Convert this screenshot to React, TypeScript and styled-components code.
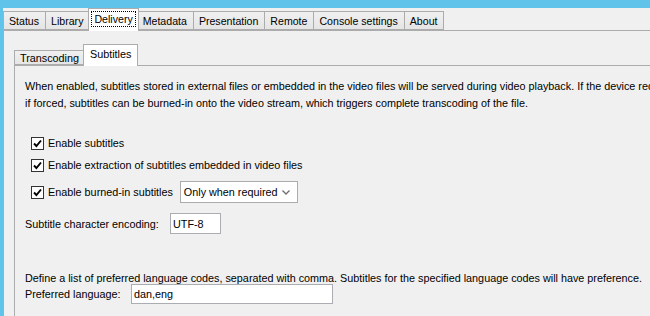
import React, { useState } from 'react'
import styled, { createGlobalStyle } from 'styled-components'

const GlobalStyle = createGlobalStyle`
  html, body {
    margin: 0;
    padding: 0;
    overflow: hidden;
  }
  body {
    font-family: 'Liberation Sans', Arial, sans-serif;
    font-size: 10.8px;
    color: #000;
  }
`

const topTabs = [
  'Status',
  'Library',
  'Delivery',
  'Metadata',
  'Presentation',
  'Remote',
  'Console settings',
  'About'
]

const Frame = styled.div`
  width: 650px;
  height: 316px;
  box-sizing: border-box;
  padding: 8px 0 0 3px;
  background: #60c3ea;
  overflow: hidden;
`

const Window = styled.div`
  height: 100%;
  background: #f0f0f0;
  display: flex;
  flex-direction: column;
`

const TabStrip = styled.div<{ $inner?: boolean }>`
  display: flex;
  align-items: flex-end;
  height: ${(p) => (p.$inner ? 20 : 22)}px;
  padding-left: 1px;
  border-bottom: 1px solid #acacac;
  flex-shrink: 0;
`

const Tab = styled.div<{ $active?: boolean; $inner?: boolean }>`
  box-sizing: border-box;
  font-size: ${(p) => (p.$inner ? 10.8 : 10.6)}px;
  height: ${(p) =>
    p.$active ? (p.$inner ? 22 : 23) : p.$inner ? 15 : 19}px;
  margin: 0 ${(p) => (p.$active ? -1 : 0)}px
    ${(p) => (p.$active ? -1 : 0)}px;
  margin-left: ${(p) => (p.$active ? -2 : -1)}px;
  padding: 0 ${(p) => (p.$active ? (p.$inner ? 6 : 3) : p.$inner ? 5 : 4)}px
    ${(p) => (p.$active ? 3 : 0)}px
    ${(p) => (p.$active ? (p.$inner ? 6 : 3) : p.$inner ? 5 : 3)}px;
  display: flex;
  align-items: center;
  border: 1px solid #acacac;
  border-bottom: ${(p) => (p.$active ? 'none' : '1px solid #acacac')};
  background: ${(p) =>
    p.$active ? '#ffffff' : 'linear-gradient(#f0f0f0, #e5e5e5)'};
  position: relative;
  z-index: ${(p) => (p.$active ? 2 : 1)};
  white-space: nowrap;
`

const FocusLabel = styled.span<{ $focus?: boolean }>`
  padding: 1px 2px;
  outline: ${(p) => (p.$focus ? '1px dotted #000' : 'none')};
`

const OuterPane = styled.div`
  flex: 1;
  border-left: 1px solid #acacac;
  padding: 14px 0 0 10px;
  display: flex;
  flex-direction: column;
`

const InnerPane = styled.div`
  flex: 1;
  border-left: 1px solid #acacac;
  padding: 12px 0 0 10px;
  display: flex;
  flex-direction: column;
`

const Description = styled.p<{ $lh?: number; $mt?: number }>`
  margin: ${(p) => p.$mt ?? 0}px 0 0;
  line-height: ${(p) => p.$lh ?? 17}px;
  white-space: nowrap;
`

const CheckList = styled.div`
  margin-top: 20px;
  padding-left: 6px;
  display: flex;
  flex-direction: column;
`

const CheckRow = styled.label<{ $mt?: number }>`
  display: flex;
  align-items: center;
  height: 22px;
  margin-top: ${(p) => p.$mt ?? 0}px;
  gap: 4px;
  white-space: nowrap;
`

const Box = styled.span`
  width: 13px;
  height: 13px;
  box-sizing: border-box;
  border: 1px solid #333;
  background: #fff;
  display: inline-flex;
  align-items: center;
  justify-content: center;
  flex-shrink: 0;
`

const Combo = styled.div`
  margin-left: 3px;
  width: 118px;
  height: 22px;
  box-sizing: border-box;
  border: 1px solid #acacac;
  background: #fff;
  display: flex;
  align-items: center;
  justify-content: space-between;
  padding: 0 7px 0 3px;
`

const FieldRow = styled.div<{ $mt: number }>`
  display: flex;
  align-items: center;
  margin-top: ${(p) => p.$mt}px;
  white-space: nowrap;
`

const Label = styled.span<{ $w: number }>`
  width: ${(p) => p.$w}px;
  flex-shrink: 0;
`

const TextField = styled.div<{ $w: number; $h: number }>`
  width: ${(p) => p.$w}px;
  height: ${(p) => p.$h}px;
  box-sizing: border-box;
  border: 1px solid #abadb3;
  background: #fff;
  display: flex;
  align-items: center;
  padding-left: 2px;
`

const Check = ({ label, checked }: { label: string; checked: boolean }) => (
  <>
    <Box>
      {checked && (
        <svg width='9' height='9' viewBox='0 0 9 9'>
          <path
            d='M1 4.5 L3.4 7 L8 1.5'
            fill='none'
            stroke='#000'
            strokeWidth='1.9'
          />
        </svg>
      )}
    </Box>
    <span>{label}</span>
  </>
)

export default function App() {
  const [active] = useState('Delivery')

  return (
    <Frame>
      <GlobalStyle />
      <Window>
        <TabStrip>
          {topTabs.map((t) => (
            <Tab key={t} $active={t === active}>
              <FocusLabel $focus={t === active}>{t}</FocusLabel>
            </Tab>
          ))}
        </TabStrip>
        <OuterPane>
          <TabStrip $inner>
            <Tab $inner>Transcoding</Tab>
            <Tab $inner $active>
              Subtitles
            </Tab>
          </TabStrip>
          <InnerPane>
            <Description>
              When enabled, subtitles stored in external files or embedded in
              the video files will be served during video playback. If the
              device requires it,
              <br />
              if forced, subtitles can be burned-in onto the video stream, which
              triggers complete transcoding of the file.
            </Description>
            <CheckList>
              <CheckRow>
                <Check label='Enable subtitles' checked />
              </CheckRow>
              <CheckRow>
                <Check
                  label='Enable extraction of subtitles embedded in video files'
                  checked
                />
              </CheckRow>
              <CheckRow $mt={5}>
                <Check label='Enable burned-in subtitles' checked />
                <Combo>
                  <span>Only when required</span>
                  <svg width='8' height='5' viewBox='0 0 8 5'>
                    <path
                      d='M0.5 0.5 L4 4 L7.5 0.5'
                      fill='none'
                      stroke='#6d6d6d'
                      strokeWidth='1.3'
                    />
                  </svg>
                </Combo>
              </CheckRow>
            </CheckList>
            <FieldRow $mt={10}>
              <Label $w={145}>Subtitle character encoding:</Label>
              <TextField $w={51} $h={21}>
                UTF-8
              </TextField>
            </FieldRow>
            <Description $lh={12} $mt={38}>
              Define a list of preferred language codes, separated with comma.
              Subtitles for the specified language codes will have preference.
            </Description>
            <FieldRow $mt={0}>
              <Label $w={106}>Preferred language:</Label>
              <TextField $w={202} $h={20}>
                dan,eng
              </TextField>
            </FieldRow>
          </InnerPane>
        </OuterPane>
      </Window>
    </Frame>
  )
}
